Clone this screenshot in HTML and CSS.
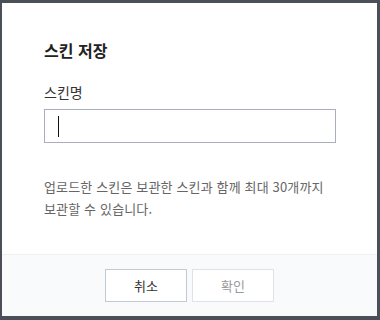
FILE: index.html
```html
<!DOCTYPE html>
<html lang="ko">
<head>
    <meta charset="UTF-8">
    <title>스킨 저장</title>
    <link rel="stylesheet" href="styles.css">
</head>
<body>
    <div class="dialog">
        <div class="dialog-body">
            <h2 class="dialog-title">스킨 저장</h2>
            <label class="field-label" for="skinName">스킨명</label>
            <div class="field-input" id="skinName">
                <span class="caret"></span>
            </div>
            <p class="help-text">업로드한 스킨은 보관한 스킨과 함께 최대 30개까지<br>보관할 수 있습니다.</p>
        </div>
        <div class="dialog-footer">
            <button class="btn">취소</button>
            <button class="btn btn-disabled">확인</button>
        </div>
    </div>
</body>
</html>
```

FILE: styles.css
```css
* {
    margin: 0;
    padding: 0;
    box-sizing: border-box;
    font-family: "Noto Sans CJK KR", "Noto Sans", sans-serif;
}

body {
    background: #4b5058;
    width: 380px;
    height: 320px;
    overflow: hidden;
}

.dialog {
    margin: 3px 3px 0 2px;
    height: 313px;
    background: #fff;
    display: flex;
    flex-direction: column;
}

.dialog-body {
    flex: 1;
    padding: 37px 0 0 42px;
}

.dialog-title {
    font-size: 16px;
    line-height: 20px;
    font-weight: bold;
    color: #222;
}

.field-label {
    display: block;
    margin-top: 22px;
    font-size: 14px;
    line-height: 20px;
    color: #333;
}

.field-input {
    margin-top: 7px;
    width: 292px;
    height: 34px;
    border: 1px solid #a9b0bc;
    display: flex;
    align-items: center;
    padding-left: 13px;
}

.caret {
    width: 1px;
    height: 21px;
    background: #111;
}

.help-text {
    margin-top: 33px;
    font-size: 13px;
    line-height: 22px;
    letter-spacing: 0.15px;
    color: #666;
}

.dialog-footer {
    height: 62px;
    border-top: 1px solid #eceff3;
    background: #f8fafc;
    display: flex;
    justify-content: center;
    gap: 5px;
    padding-top: 14px;
}

.btn {
    width: 82px;
    height: 33px;
    background: #fff;
    border: 1px solid #c3c9d3;
    font-size: 13px;
    color: #333;
}

.btn-disabled {
    border-color: #dfe3e9;
    color: #999;
}
```
